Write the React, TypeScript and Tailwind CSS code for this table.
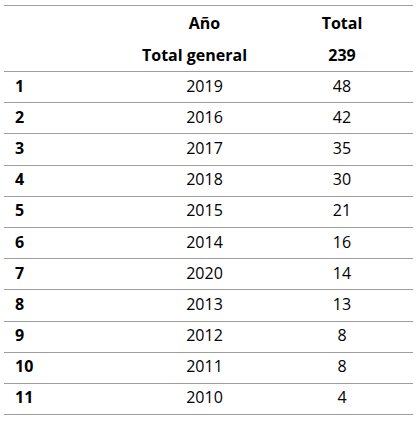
import React from "react";

const rows: [number, number, number][] = [
  [1, 2019, 48],
  [2, 2016, 42],
  [3, 2017, 35],
  [4, 2018, 30],
  [5, 2015, 21],
  [6, 2014, 16],
  [7, 2020, 14],
  [8, 2013, 13],
  [9, 2012, 8],
  [10, 2011, 8],
  [11, 2010, 4],
];

export default function App() {
  return (
    <div
      className="w-[418px] h-[422px] bg-white text-black text-[16px]"
      style={{ fontFamily: '"Open Sans", "Liberation Sans", sans-serif' }}
    >
      <div className="ml-[4px] mt-[5px] w-[409px] border-t border-[#9e9e9e]">
        {/* Header */}
        <div className="border-b border-[#9e9e9e] font-bold">
          <div className="grid grid-cols-[134px_133px_142px] h-[33px] items-center">
            <span />
            <span className="text-center">Año</span>
            <span className="text-center">Total</span>
          </div>
          <div className="grid grid-cols-[134px_133px_142px] h-[32px] items-center">
            <span />
            <span className="text-center pr-5 whitespace-nowrap">Total general</span>
            <span className="text-center">239</span>
          </div>
        </div>

        {/* Body */}
        {rows.map(([rank, year, total]) => (
          <div
            key={rank}
            className="grid grid-cols-[134px_133px_142px] h-[31.2px] items-center border-b border-[#9e9e9e] pb-[3px]"
          >
            <span className="pl-[11px] font-bold">{rank}</span>
            <span className="text-center">{year}</span>
            <span className="text-center">{total}</span>
          </div>
        ))}
      </div>
    </div>
  );
}
